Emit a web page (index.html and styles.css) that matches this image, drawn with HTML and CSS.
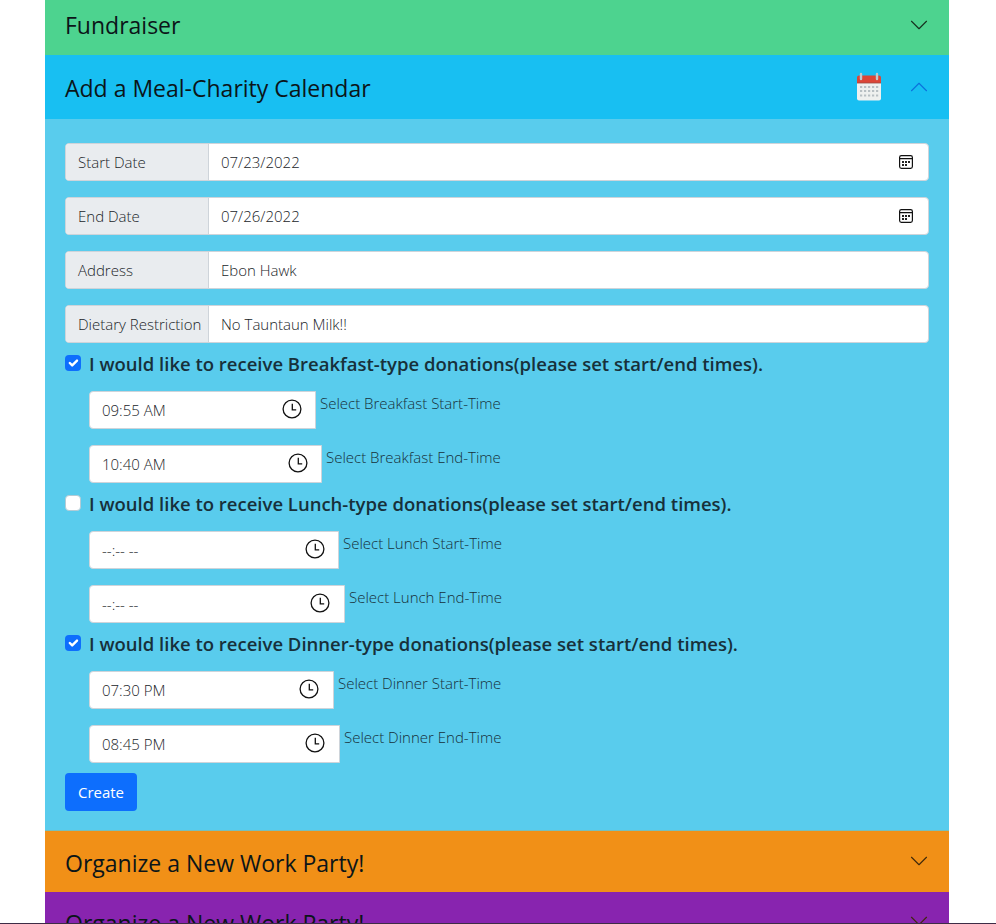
FILE: index.html
```html
<!DOCTYPE html>
<html lang="en">
<head>
<meta charset="utf-8">
<title>Events</title>
<link rel="stylesheet" href="styles.css">
</head>
<body>
<svg class="defs" width="0" height="0">
  <symbol id="chevron" viewBox="0 0 16 16"><path fill="none" stroke="currentColor" stroke-width=".9" stroke-linecap="round" stroke-linejoin="round" d="M2 5l6 6 6-6"/></symbol>
  <symbol id="date" viewBox="0 0 16 16"><rect x="1.6" y="1.6" width="12.8" height="12.8" rx="1.8" fill="none" stroke="#111" stroke-width="1.2"/><path d="M2 4.6h12" stroke="#111" stroke-width="1.2"/><path fill="#222" d="M4 7h2v2H4zM7 7h2v2H7zM10 7h2v2h-2zM4 10h2v2H4zM7 10h2v2H7z"/></symbol>
  <symbol id="clock" viewBox="0 0 20 20"><circle cx="10" cy="10" r="8.9" fill="none" stroke="#111" stroke-width="1.3"/><path d="M10.3 4.8v6.1h3.9" fill="none" stroke="#111" stroke-width="1.3"/></symbol>
  <symbol id="check" viewBox="0 0 20 20"><path fill="none" stroke="#fff" stroke-linecap="round" stroke-linejoin="round" stroke-width="3" d="M6 10l3 3 6-6"/></symbol>
</svg>
<main class="accordion">
  <section class="head green"><h2 class="t-fund">Fundraiser</h2><svg class="chev"><use href="#chevron"/></svg></section>
  <section class="head blue"><h2 class="t-meal">Add a Meal-Charity Calendar</h2>
    <svg class="cal" viewBox="0 0 26 30">
      <path fill="#eef0ef" d="M1 10h24v16.500a2 2 0 0 1-2 2H3a2 2 0 0 1-2-2z"/>
      <path fill="#dc4537" d="M1 11V5.500a2 2 0 0 1 2-2h20a2 2 0 0 1 2 2V11z"/>
      <path stroke="#9b4a43" stroke-width=".8" d="M1 11h24"/>
      <path stroke="#b7bfc3" stroke-width="2" stroke-dasharray="2.200 1.800" d="M4 15h19M4 19h19M4 23.500h19"/>
      <path stroke="#c0c9ce" stroke-width="2.400" stroke-linecap="round" d="M5 2v5M21 2v5"/>
    </svg>
    <svg class="chev open"><use href="#chevron"/></svg></section>
  <form class="body">
    <div class="group"><label class="tag">Start Date</label><div class="field"><span class="num">07/23/2022</span><svg class="date"><use href="#date"/></svg></div></div>
    <div class="group"><label class="tag">End Date</label><div class="field"><span class="num">07/26/2022</span><svg class="date"><use href="#date"/></svg></div></div>
    <div class="group"><label class="tag">Address</label><div class="field">Ebon Hawk</div></div>
    <div class="group"><label class="tag">Dietary Restriction</label><div class="field">No Tauntaun Milk!!</div></div>

    <div class="meal"><span class="box on"><svg><use href="#check"/></svg></span><h5>I would like to receive Breakfast-type donations(please set start/end times).</h5></div>
    <div class="time bs"><div class="input"><span>09:55 AM</span><svg><use href="#clock"/></svg></div><label>Select Breakfast Start-Time</label></div>
    <div class="time be"><div class="input"><span>10:40 AM</span><svg><use href="#clock"/></svg></div><label>Select Breakfast End-Time</label></div>

    <div class="meal"><span class="box"></span><h5>I would like to receive Lunch-type donations(please set start/end times).</h5></div>
    <div class="time ls"><div class="input"><span class="empty">--:-- --</span><svg><use href="#clock"/></svg></div><label>Select Lunch Start-Time</label></div>
    <div class="time le"><div class="input"><span class="empty">--:-- --</span><svg><use href="#clock"/></svg></div><label>Select Lunch End-Time</label></div>

    <div class="meal"><span class="box on"><svg><use href="#check"/></svg></span><h5>I would like to receive Dinner-type donations(please set start/end times).</h5></div>
    <div class="time ds"><div class="input"><span>07:30 PM</span><svg><use href="#clock"/></svg></div><label>Select Dinner Start-Time</label></div>
    <div class="time de"><div class="input"><span>08:45 PM</span><svg><use href="#clock"/></svg></div><label>Select Dinner End-Time</label></div>
    <button type="button" class="create">Create</button>
  </form>
  <section class="head orange"><h2>Organize a New Work Party!</h2><svg class="chev"><use href="#chevron"/></svg></section>
  <section class="head purple"><h2>Organize a New Work Party!</h2><svg class="chev"><use href="#chevron"/></svg></section>
</main>
<footer class="edge"></footer>
</body>
</html>
```
FILE: styles.css
```css
* { box-sizing: border-box; }
body { margin: 0; height: 924px; overflow: hidden; display: flex; flex-direction: column; background: #fff; color: #212529; font: 300 15px/24px "Segoe UI", "Open Sans", sans-serif; }
.defs { display: none; }
.accordion { width: 904px; height: 923px; margin-left: 45px; overflow: hidden; display: flex; flex-direction: column; }
.head { flex: none; display: flex; align-items: center; padding: 0 20px; color: #0b1519; }
h2 { margin: 0; flex: 1; font-size: 23px; font-weight: 400; line-height: 30px; white-space: nowrap; }
.chev { width: 20px; height: 20px; color: #17301f; }
.green { height: 55px; padding-bottom: 6px; background: #4dd38f; }
.blue { height: 64px; background: #18bff2; }
.blue h2 { padding-top: 1px; }
.open { color: #0b72dc; transform: rotate(180deg); }
.cal { width: 26px; height: 30px; margin-right: 27px; }
.orange { height: 61px; background: #f19017; padding-top: 2px; }
.purple { height: 61px; background: #8824af; }
.orange .chev, .purple .chev { margin-bottom: 4px; color: #40290b; }
.body { height: 712px; flex: none; padding: 24px 20px 16px; background: #59cced; border-bottom: 1px solid #79bfb9; }
.group { display: flex; height: 38px; margin-bottom: 16px; border: 1px solid #ced4da; border-radius: 4px; background: #fff; overflow: hidden; }
.group:nth-child(4) { margin-bottom: 0; }
.tag { width: 143px; padding: 6px 0 0 12px; background: #e9ecef; border-right: 1px solid #ced4da; white-space: nowrap; overflow: hidden; }
.field { flex: 1; display: flex; justify-content: space-between; padding: 6px 14px 0 12px; }
.date { width: 16px; height: 16px; margin-top: 4px; }
.meal { display: flex; height: 48px; }
.box { width: 16px; height: 16px; margin: 12px 8px 0 0; flex: none; border: 1px solid #b3cbd5; border-radius: 4px; background: #fff; }
.box.on { background: #0d6efd; border: 0; }
.box svg { display: block; width: 16px; height: 16px; }
h5 { margin: 9px 0 0; font-size: 18.5px; font-weight: 600; line-height: 24px; white-space: nowrap; color: #17303a; }
.time { display: flex; height: 38px; margin: 0 0 16px 24px; }
.time:has(+ .meal) { margin-bottom: 0; }
.input { flex: none; width: 227px; display: flex; justify-content: space-between; padding: 6px 13px 0 12px; border: 1px solid #ced4da; border-radius: 4px 0 0 4px; background: #fff; }
.input svg { width: 20px; height: 20px; margin-top: 1px; }
.time label { padding-left: 4px; white-space: nowrap; color: #17303a; }
.be .input { width: 233px; }
.ls .input { width: 250px; }
.le .input { width: 256px; padding-right: 14px; }
.ds .input { width: 245px; padding-right: 14px; }
.de .input { width: 251px; padding-right: 14px; }
.de { margin-bottom: 10px; }
.create { display: block; width: 72px; height: 38px; padding: 0; border: 0; border-radius: 4px; background: #0d6efd; color: #fff; font: 400 15px/38px "Open Sans", sans-serif; }
.edge { height: 1px; background: #3d2c46; }
```
